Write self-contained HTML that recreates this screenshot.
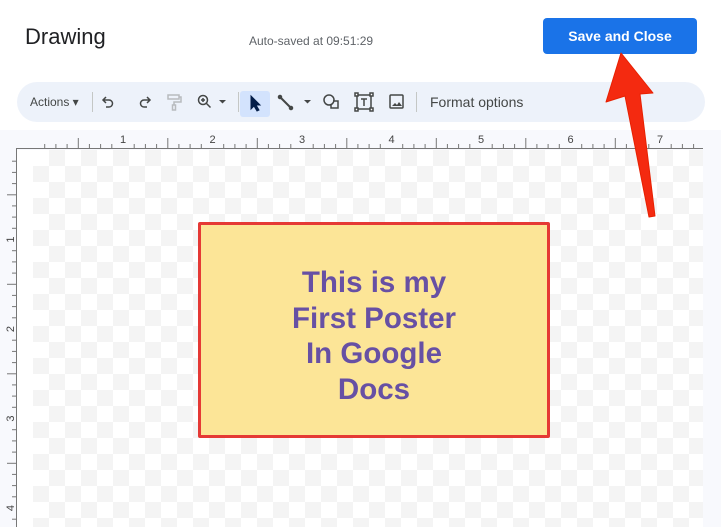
<!DOCTYPE html>
<html><head><meta charset="utf-8"><style>
html,body{margin:0;padding:0;width:721px;height:527px;overflow:hidden;background:#fff;font-family:"Liberation Sans",Arial,sans-serif;position:relative}
.abs{position:absolute}
#title{left:25px;top:24px;font-size:22px;color:#202124}
#auto{left:249px;top:34px;font-size:12px;color:#5f6368}
#btn{left:543px;top:18px;width:154px;height:36px;background:#1a73e8;border-radius:4px;color:#fff;font-weight:bold;font-size:14px;text-align:center;line-height:36px}
#tb{left:17px;top:82px;width:688px;height:40px;background:#edf2fa;border-radius:20px}
#canvasbg{left:0;top:130px;width:721px;height:397px;background:#f8f9fd}
#white{left:17px;top:150px;width:686px;height:377px;background:#fff}
#check{left:33px;top:150px;width:670px;height:377px;
background-color:#fff;
background-image:linear-gradient(45deg,#f4f4f4 25%,transparent 25%,transparent 75%,#f4f4f4 75%),linear-gradient(45deg,#f4f4f4 25%,transparent 25%,transparent 75%,#f4f4f4 75%);
background-size:32px 32px;background-position:0 0,16px 16px}
#box{left:198px;top:222px;width:346px;height:210px;border:3px solid #e53935;background:#fce597;border-radius:2px}
#txt{left:198px;top:265px;width:352px;text-align:center;font-weight:bold;font-size:29.5px;line-height:35.5px;color:#6750a4}
.sep{position:absolute;top:92px;width:1px;height:20px;background:#c4c7c5}
</style></head><body>
<div class="abs" id="title">Drawing</div>
<div class="abs" id="auto">Auto-saved at 09:51:29</div>
<div class="abs" id="btn">Save and Close</div>
<div class="abs" id="tb"></div>
<div class="abs" style="left:30px;top:95px;font-size:12px;color:#444746">Actions ▾</div>
<div class="sep" style="left:92px"></div>
<svg class="abs" style="left:0;top:82px" width="560" height="40" fill="none" stroke="#444746" stroke-width="1.5">
<path d="M106 15 l-3 3 3 3 M103 18 h6 a3.5 3.5 0 0 1 0 7 h-3"/>
<path d="M147 15 l3 3 -3 3 M150 18 h-6 a3.5 3.5 0 0 0 0 7 h3"/>
<g stroke="#b8bbbe"><rect x="168" y="13" width="11" height="4"/><path d="M179 15 h2 v5 h-7 v3"/><rect x="172.5" y="23" width="3" height="5"/></g>
<circle cx="203" cy="18" r="4.5"/><path d="M206.5 21.5 l4 4 M201 18 h4 M203 16 v4"/>
<path d="M219 18 l3.5 3.5 3.5 -3.5z" fill="#444746" stroke="none"/>
<rect x="240" y="9" width="30" height="26" rx="3" fill="#d3e3fd" stroke="none"/>
<path d="M251 14 v13 l3 -3 3 5 2 -1 -3 -5 h4z" fill="#041e49" stroke="#041e49" stroke-width="1"/>
<path d="M280 15 l11 11" stroke-width="2"/><circle cx="280" cy="15" r="1.5" fill="#444746"/><circle cx="291" cy="26" r="1.5" fill="#444746"/>
<path d="M304 18 l3.5 3.5 3.5 -3.5z" fill="#444746" stroke="none"/>
<circle cx="329" cy="18" r="5"/><path d="M333 19 h5 v7 h-7 v-3"/>
<rect x="357" y="13" width="14" height="14"/><path d="M361 17 h6 M364 17 v7" /><g fill="#fff"><rect x="355" y="11" width="3" height="3"/><rect x="370" y="11" width="3" height="3"/><rect x="355" y="26" width="3" height="3"/><rect x="370" y="26" width="3" height="3"/></g>
<rect x="390" y="13" width="13" height="13" rx="1"/><path d="M392 24 l3 -3 2 2 2 -3 3 4z" fill="#444746" stroke="none"/>
</svg>
<div class="sep" style="left:238px"></div>
<div class="sep" style="left:416px"></div>
<div class="abs" style="left:430px;top:94px;font-size:14px;color:#444746">Format options</div>
<div class="abs" id="canvasbg"></div>
<div class="abs" id="white"></div>
<div class="abs" id="check"></div>
<svg id="ruler" class="abs" style="left:0;top:0" width="721" height="527"></svg>
<div class="abs" id="box"></div>
<div class="abs" id="txt">This is my<br>First Poster<br>In Google<br>Docs</div>
<svg class="abs" style="left:0;top:0" width="721" height="527">
<path d="M621 53 L606 102 L625 96 L649 217 L655 216 L640 94 L653 93 Z" fill="#f42a10" stroke="#e82000" stroke-width="1" stroke-linejoin="round"/>
</svg>
<script>
var s='',u=89.5,ox=33.5,oy=150,st=u/8;
s+='<line x1="17" y1="148.5" x2="703" y2="148.5" stroke="#777" />';
s+='<line x1="16.5" y1="148" x2="16.5" y2="527" stroke="#777" />';
for(var i=0;i*st<670;i++){var x=ox+i*st;if(i%8==0){if(i>0)s+='<text x="'+x+'" y="143" font-size="11" text-anchor="middle" fill="#444" font-family="Liberation Sans">'+(i/8)+'</text>';continue;}
var h=(i%4==0)?10:4;s+='<line x1="'+x.toFixed(1)+'" y1="'+(148-h)+'" x2="'+x.toFixed(1)+'" y2="148" stroke="#777"/>';}
for(var i=0;i*st<380;i++){var y=oy+i*st;if(i%8==0){if(i>0)s+='<text transform="translate(10,'+y+') rotate(-90)" font-size="11" text-anchor="middle" fill="#444" font-family="Liberation Sans" dy="4">'+(i/8)+'</text>';continue;}
var h=(i%4==0)?9:4;s+='<line y1="'+y.toFixed(1)+'" x1="'+(16-h)+'" y2="'+y.toFixed(1)+'" x2="16" stroke="#777"/>';}
document.getElementById('ruler').innerHTML=s;
</script>
</body></html>
